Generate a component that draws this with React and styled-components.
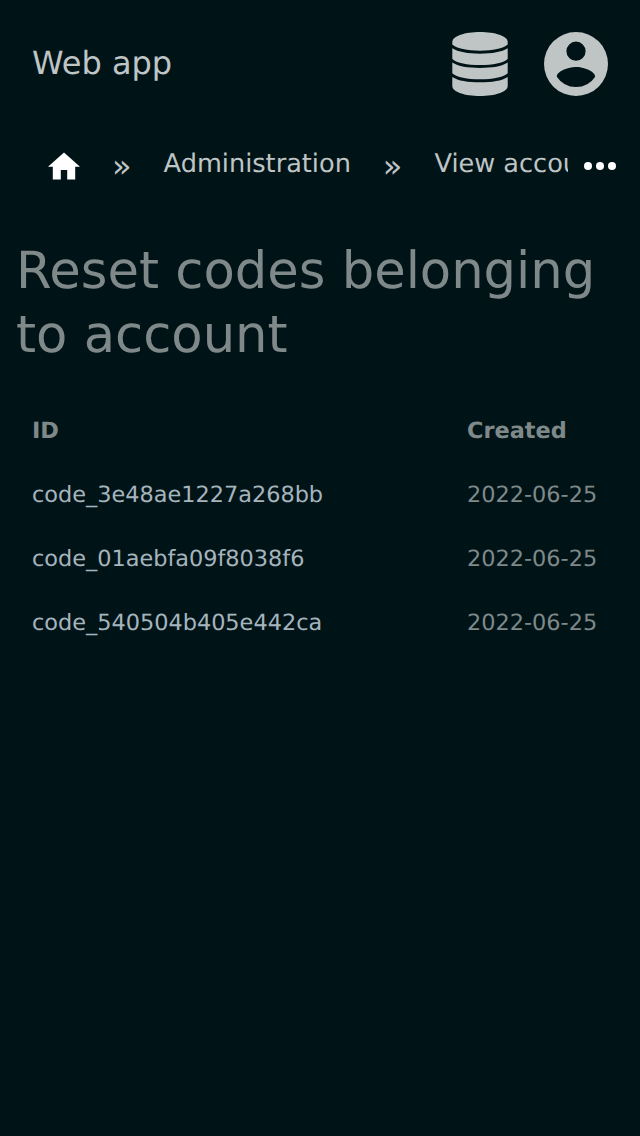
import React from "react";
import styled, { createGlobalStyle } from "styled-components";

const Global = createGlobalStyle`
  * { box-sizing: border-box; }
  body { margin: 0; background: #001418; color: #7f8989; font-family: "DejaVu Sans", sans-serif; text-rendering: geometricPrecision; }
`;
const Page = styled.div`min-height: 1136px; width: 640px; background: #001418; overflow: hidden;`;
const Header = styled.header`
  display: flex; align-items: center; height: 128px; padding: 0 32px;
`;
const Brand = styled.div`flex: 1; font-size: 32px; line-height: 62px; padding-bottom: 2px; color: #bfc4c5;`;
const Actions = styled.div`
  display: flex; gap: 32px; color: #bfc4c5;
  svg { display: block; width: 64px; height: 64px; fill: currentColor; }
`;
const Crumbs = styled.nav`display: flex; height: 72px; align-items: center;`;
const Trail = styled.div`
  display: flex; align-items: center; width: 568px; height: 72px; padding-left: 48px;
  overflow: hidden; white-space: nowrap; font-size: 25.6px; color: #bfc4c5;
`;
const HomeIcon = styled.svg`flex: none; width: 32px; height: 28px; fill: #fff; margin-top: 4px;`;
const Separator = styled.span`flex: none; margin: 0 32px; font-size: 32px; line-height: 68px; padding-top: 4px;`;
const Crumb = styled.span`flex: none; line-height: 72px;`;
const More = styled.svg`width: 32px; height: 10px; margin: 4px 0 0 16px; fill: #fff;`;
const Title = styled.h1`
  margin: 39px 16px 32px; font-size: 51.2px; line-height: 64px; font-weight: 400; color: #7f8989;
`;
const Table = styled.div`display: grid; grid-template-columns: 435px 1fr; padding: 0 32px; font-size: 22.4px; line-height: 64px;`;
const Heading = styled.div`font-weight: 700;`;
const Cell = styled.div`color: ${(p) => (p.$link ? "#a6b4be" : "#7f8989")};`;

const codes = ["code_3e48ae1227a268bb", "code_01aebfa09f8038f6", "code_540504b405e442ca"];

export default function App() {
  return (
    <Page>
      <Global />
      <Header>
        <Brand>Web app</Brand>
        <Actions>
          <svg viewBox="0 0 64 64">
            <path d="M4.300 10C4.300 4 17 0 32 0s27.700 4 27.700 10v2.500C55 16.500 45 18.700 32 18.700S9 16.500 4.300 12.500z" />
            <path d="M4.300 16.300C10 20 20 21.700 32 21.700s22-1.700 27.700-5.400V27C55 31 45 33 32 33S9 31 4.300 27z" />
            <path d="M4.300 30.600C10 34.500 20 36 32 36s22-1.500 27.700-5.400V41.300C55 45.300 45 47.300 32 47.300S9 45.300 4.300 41.300z" />
            <path d="M4.300 44.900C10 48.700 20 50.300 32 50.300s22-1.600 27.700-5.400V54C59.700 60 47 64 32 64S4.300 60 4.300 54z" />
          </svg>
          <svg viewBox="2 2 20 20">
            <path d="M12 2a10 10 0 1 0 0 20 10 10 0 0 0 0-20zm0 3a3 3 0 1 1 0 6 3 3 0 0 1 0-6zm0 14.200a7.200 7.200 0 0 1-6-3.220c.03-1.990 4-3.080 6-3.080 1.990 0 5.970 1.090 6 3.080a7.200 7.200 0 0 1-6 3.220z" />
          </svg>
        </Actions>
      </Header>
      <Crumbs>
        <Trail>
          <HomeIcon viewBox="2 3 20 17"><path d="M10 20v-6h4v6h5v-8h3L12 3 2 12h3v8z" /></HomeIcon>
          <Separator>»</Separator>
          <Crumb>Administration</Crumb>
          <Separator>»</Separator>
          <Crumb>View account</Crumb>
        </Trail>
        <More viewBox="0 0 32 10"><circle cx="4" cy="5" r="4" /><circle cx="16" cy="5" r="4" /><circle cx="28" cy="5" r="4" /></More>
      </Crumbs>
      <Title>Reset codes belonging to account</Title>
      <Table>
        <Heading>ID</Heading>
        <Heading>Created</Heading>
        {codes.map((code) => (
          <React.Fragment key={code}>
            <Cell $link>{code}</Cell>
            <Cell>2022-06-25</Cell>
          </React.Fragment>
        ))}
      </Table>
    </Page>
  );
}
